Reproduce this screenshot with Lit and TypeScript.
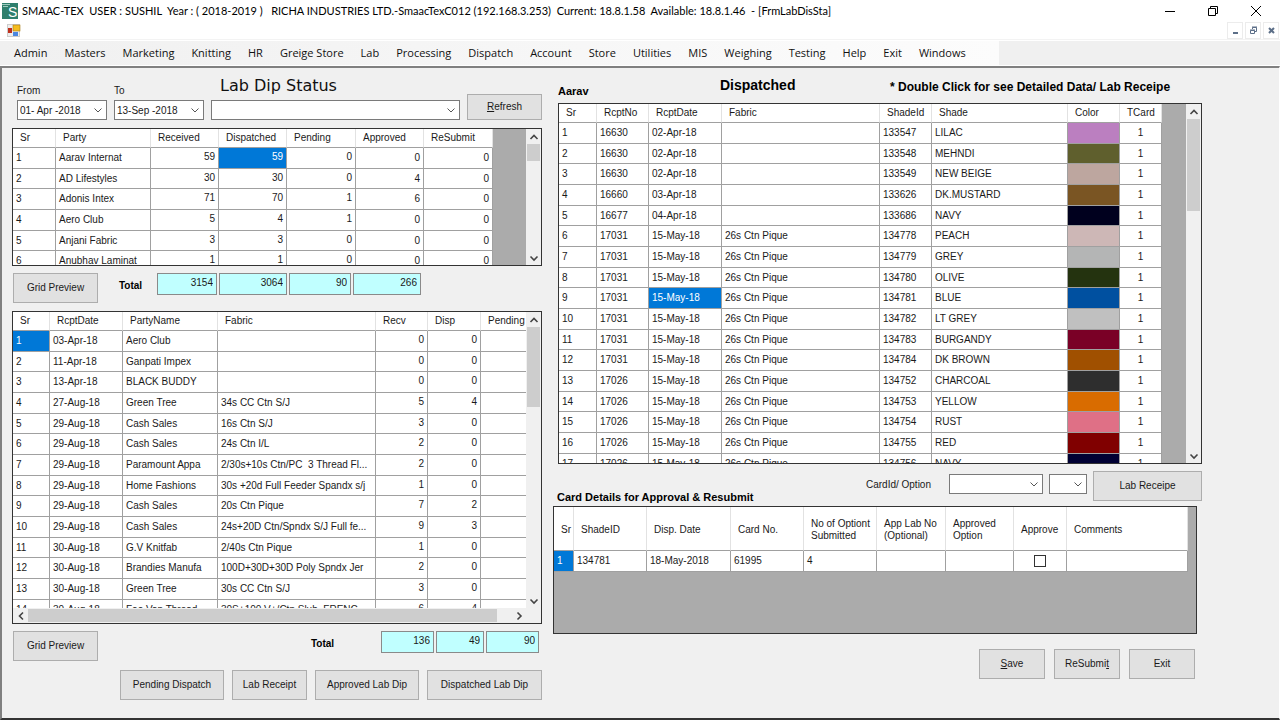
import { LitElement, html, css, nothing } from "lit";
import { customElement } from "lit/decorators.js";
import { classMap } from "lit/directives/class-map.js";

interface Column {
  label: string;
  width: number;
  kind?: "num" | "center" | "swatch" | "check";
  raised?: boolean;
}

interface GridSpec {
  name: string;
  columns: Column[];
  rows: string[][];
  selected: [number, number];
}

const statusGrid: GridSpec = {
  name: "Lab dip status by party",
  columns: [
    { label: "Sr", width: 43 },
    { label: "Party", width: 95 },
    { label: "Received", width: 68, kind: "num", raised: true },
    { label: "Dispatched", width: 68, kind: "num", raised: true },
    { label: "Pending", width: 69, kind: "num", raised: true },
    { label: "Approved", width: 68, kind: "num" },
    { label: "ReSubmit", width: 69, kind: "num" },
  ],
  rows: [
    ["1", "Aarav Internat", "59", "59", "0", "0", "0"],
    ["2", "AD Lifestyles", "30", "30", "0", "4", "0"],
    ["3", "Adonis Intex", "71", "70", "1", "6", "0"],
    ["4", "Aero Club", "5", "4", "1", "0", "0"],
    ["5", "Anjani Fabric", "3", "3", "0", "0", "0"],
    ["6", "Anubhav Laminat", "1", "1", "0", "0", "0"],
  ],
  selected: [0, 3],
};

const receiptGrid: GridSpec = {
  name: "Receipts",
  columns: [
    { label: "Sr", width: 37 },
    { label: "RcptDate", width: 73 },
    { label: "PartyName", width: 95 },
    { label: "Fabric", width: 158 },
    { label: "Recv", width: 52, kind: "num", raised: true },
    { label: "Disp", width: 53, kind: "num", raised: true },
    { label: "Pending", width: 68, kind: "num", raised: true },
  ],
  rows: [
    ["1", "03-Apr-18", "Aero Club", "", "0", "0", ""],
    ["2", "11-Apr-18", "Ganpati Impex", "", "0", "0", ""],
    ["3", "13-Apr-18", "BLACK BUDDY", "", "0", "0", ""],
    ["4", "27-Aug-18", "Green Tree", "34s CC Ctn S/J", "5", "4", ""],
    ["5", "29-Aug-18", "Cash Sales", "16s Ctn S/J", "3", "0", ""],
    ["6", "29-Aug-18", "Cash Sales", "24s Ctn I/L", "2", "0", ""],
    ["7", "29-Aug-18", "Paramount Appa", "2/30s+10s Ctn/PC  3 Thread Fl...", "2", "0", ""],
    ["8", "29-Aug-18", "Home Fashions", "30s +20d Full Feeder Spandx s/j", "1", "0", ""],
    ["9", "29-Aug-18", "Cash Sales", "20s Ctn Pique", "7", "2", ""],
    ["10", "29-Aug-18", "Cash Sales", "24s+20D Ctn/Spndx S/J Full fe...", "9", "3", ""],
    ["11", "30-Aug-18", "G.V Knitfab", "2/40s Ctn Pique", "1", "0", ""],
    ["12", "30-Aug-18", "Brandies Manufa", "100D+30D+30D Poly Spndx Jer", "2", "0", ""],
    ["13", "30-Aug-18", "Green Tree", "30s CC Ctn S/J", "3", "0", ""],
    ["14", "30-Aug-18", "Foo Van Thread", "30S+100 V+/Ctn Slub  FRENC", "6", "4", ""],
  ],
  selected: [0, 0],
};

const pique = "26s Ctn Pique";
const dispatchedGrid: GridSpec = {
  name: "Dispatched shades",
  columns: [
    { label: "Sr", width: 38 },
    { label: "RcptNo", width: 52 },
    { label: "RcptDate", width: 73 },
    { label: "Fabric", width: 158 },
    { label: "ShadeId", width: 52 },
    { label: "Shade", width: 136 },
    { label: "Color", width: 52, kind: "swatch" },
    { label: "TCard", width: 42, kind: "center" },
  ],
  rows: [
    ["1", "16630", "02-Apr-18", "", "133547", "LILAC", "#bb7fc0", "1"],
    ["2", "16630", "02-Apr-18", "", "133548", "MEHNDI", "#5f5f2d", "1"],
    ["3", "16630", "02-Apr-18", "", "133549", "NEW BEIGE", "#bda69f", "1"],
    ["4", "16660", "03-Apr-18", "", "133626", "DK.MUSTARD", "#7a5523", "1"],
    ["5", "16677", "04-Apr-18", "", "133686", "NAVY", "#00001e", "1"],
    ["6", "17031", "15-May-18", pique, "134778", "PEACH", "#cdb7b6", "1"],
    ["7", "17031", "15-May-18", pique, "134779", "GREY", "#b4b5b5", "1"],
    ["8", "17031", "15-May-18", pique, "134780", "OLIVE", "#24330f", "1"],
    ["9", "17031", "15-May-18", pique, "134781", "BLUE", "#0050a0", "1"],
    ["10", "17031", "15-May-18", pique, "134782", "LT GREY", "#c0c0c0", "1"],
    ["11", "17031", "15-May-18", pique, "134783", "BURGANDY", "#7a0026", "1"],
    ["12", "17031", "15-May-18", pique, "134784", "DK BROWN", "#a05000", "1"],
    ["13", "17026", "15-May-18", pique, "134752", "CHARCOAL", "#2e2e2e", "1"],
    ["14", "17026", "15-May-18", pique, "134753", "YELLOW", "#d96c00", "1"],
    ["15", "17026", "15-May-18", pique, "134754", "RUST", "#df7086", "1"],
    ["16", "17026", "15-May-18", pique, "134755", "RED", "#800000", "1"],
    ["17", "17026", "15-May-18", pique, "134756", "NAVY", "#000033", "1"],
  ],
  selected: [8, 2],
};

const cardGrid: GridSpec = {
  name: "Card details",
  columns: [
    { label: "Sr", width: 20 },
    { label: "ShadeID", width: 73 },
    { label: "Disp. Date", width: 84 },
    { label: "Card No.", width: 73 },
    { label: "No of Optiont Submitted", width: 73 },
    { label: "App Lab No (Optional)", width: 69 },
    { label: "Approved Option", width: 68 },
    { label: "Approve", width: 53, kind: "check" },
    { label: "Comments", width: 121 },
  ],
  rows: [["1", "134781", "18-May-2018", "61995", "4", "", "", "", ""]],
  selected: [0, 0],
};

const menus = [
  "Admin", "Masters", "Marketing", "Knitting", "HR", "Greige Store", "Lab", "Processing", "Dispatch",
  "Account", "Store", "Utilities", "MIS", "Weighing", "Testing", "Help", "Exit", "Windows",
];

const arrow = (d: string) => html`<svg class="arrow" viewBox="0 0 10 10" aria-hidden="true">
  <path d=${d} fill="none" stroke="currentColor"></path>
</svg>`;
const up = "M1.5 7 5 3.5 8.5 7";
const down = "M1.5 3.5 5 7 8.5 3.5";
const left = "M7 1.5 3.5 5 7 8.5";
const right = "M3.5 1.5 7 5 3.5 8.5";

@customElement("app-root")
export class AppRoot extends LitElement {
  static styles = css`
    :host {
      display: flex;
      flex-direction: column;
      box-sizing: border-box;
      height: 100vh;
      min-height: 720px;
      background: #fff;
      color: #1a1a1a;
      font: 10px/12px "Liberation Sans", Arial, sans-serif;
    }
    *, *::before, *::after { box-sizing: border-box; }
    button, input, select { font: inherit; color: inherit; margin: 0; border-radius: 0; }
    h1, h2, p { margin: 0; }

    .titlebar {
      display: flex;
      align-items: center;
      height: 22px;
      padding: 0 3px 0 2px;
      gap: 4px;
      font: 11px/16px Lato, sans-serif;
      color: #000;
    }
    .titlebar h1 { flex: 1; font: inherit; white-space: pre; }
    .logo { width: 16px; height: 16px; }
    .sys { display: flex; }
    .sys button { width: 43px; height: 20px; padding: 0; border: 0; background: none; display: grid; place-items: center; }
    .sys svg { width: 12px; height: 12px; }

    .mdibar { display: flex; justify-content: space-between; align-items: center; height: 18px; padding: 0 1px 0 7px; border-bottom: 1px solid #f3f3f3; }
    .mdibar > svg { width: 14px; height: 13px; }
    .mdi { display: flex; gap: 2px; }
    .mdi button { width: 16px; height: 17px; padding: 0; border: 1px solid #ececec; background: #fff; display: grid; place-items: center; }
    .mdi svg { width: 9px; height: 9px; }

    .menubar { display: flex; height: 24px; margin-top: 1px; background: #f0f0f0; }
    .menubar ul {
      display: flex;
      gap: 17px;
      margin: 0;
      padding: 0 33px 0 14px;
      list-style: none;
      background: linear-gradient(90deg, #f0f0f0, #fcfcfc);
    }
    .menubar button { height: 24px; padding: 0; border: 0; background: none; font: 11px/24px "Open Sans", sans-serif; color: #111; white-space: nowrap; }

    .workspace {
      flex: 1;
      min-height: 0;
      display: grid;
      grid-template-columns: minmax(0, 530fr) minmax(0, 649fr);
      column-gap: 11px;
      margin-top: 1px;
      padding: 8px 77px 18px 10px;
      border: solid #808080;
      border-width: 2px 0 2px 2px;
      border-bottom-color: #333;
      border-right: 1px solid #fff;
      background: #f0f0f0;
    }
    .panel { display: flex; flex-direction: column; min-height: 0; }

    .push {
      height: 30px;
      padding: 0;
      border: 1px solid #adadad;
      background: #e1e1e1;
      text-align: center;
    }
    .w66 { width: 66px; } .w75 { width: 75px; } .w85 { width: 85px; }
    .w104 { width: 104px; } .w109 { width: 109px; } .w115 { width: 115px; }
    .short { height: 26px; }

    .box { display: flex; position: relative; height: 20px; border: 1px solid #7a7a7a; background: #fff; color: #555; }
    .box input, .box select { width: 100%; min-width: 0; height: 100%; padding: 0 2px; border: 0; background: none; appearance: none; color: #1a1a1a; outline: 0; }
    .box svg { position: absolute; right: 3px; top: 4px; pointer-events: none; }
    .arrow { width: 10px; height: 10px; display: block; }

    .filters { display: flex; align-items: flex-end; height: 44px; padding-left: 5px; gap: 7px; }
    .field { display: flex; flex-direction: column; gap: 3px; width: 90px; }
    .field.party { flex: 1; gap: 5px; }
    .caption { padding-left: 9px; font: 16px/18px "DejaVu Sans", Verdana, sans-serif; color: #111; }

    .grid { display: flex; border: 1px solid #333; background: #ababab; overflow: hidden; }
    .grid .side { display: flex; flex-direction: column; flex: 1; min-width: 0; }
    .view { flex: 1; min-height: 0; overflow: hidden; }
    .status { height: 138px; margin-top: 8px; flex: none; }
    .receipts { flex: 1; min-height: 120px; margin-top: 8px; }
    .receipts > .bar { padding-bottom: 15px; }
    .dispatched { height: 361px; flex: none; margin: 6px 0 0 5px; }
    .cards { height: 128px; flex: none; margin: 3px 5px 0 0; }

    table { border-collapse: separate; border-spacing: 0; table-layout: fixed; width: 0; background: #fff; }
    th { height: 19px; padding: 0 0 0 7px; border-right: 1px solid #e2e2e2; border-bottom: 1px solid #a0a0a0; font-weight: 400; text-align: left; white-space: nowrap; }
    td { height: 21px; padding: 0 3px; border-right: 1px solid #a0a0a0; border-bottom: 1px solid #a0a0a0; white-space: pre; overflow: hidden; }
    tr:nth-child(3n + 2) td { height: 20px; }
    td.num { text-align: right; }
    td.raised { padding-top: 3px; vertical-align: top; }
    td.center, td.check { text-align: center; }
    td.selected { background: #0078d7; color: #fff; }
    .cards th { height: 44px; padding-top: 2px; white-space: normal; }
    .tick { appearance: none; display: block; width: 12px; height: 12px; margin: 0 auto; border: 1px solid #333; background: #fff; }

    .bar { display: flex; background: #f0f0f0; color: #444; }
    .bar.v { flex-direction: column; width: 15px; }
    .bar.h { height: 15px; }
    .bar button { flex: none; width: 15px; height: 15px; padding: 0; border: 0; background: none; display: grid; place-items: center; }
    .bar .arrow path { stroke-width: 1.6; }
    .track { flex: 1; }
    .v .track { display: flex; flex-direction: column; }
    .thumb { background: #cdcdcd; }
    .v .thumb { width: 13px; margin: 0 auto; }
    .h .thumb { height: 13px; margin-top: 1px; }

    .totals { display: flex; align-items: flex-start; padding: 7px 0 0 1px; }
    .totals b { line-height: 26px; width: 38px; color: #000; }
    .totals .first { margin-left: 21px; }
    .totals .second { margin-left: 213px; width: 70px; }
    .sum { height: 22px; padding: 0 3px 3px; border: 1px solid #8a8a8a; background: #c0ffff; text-align: right; outline: 0; margin-right: 2px; }
    .sum.s60 { width: 60px; } .sum.s68 { width: 68px; } .sum.s62 { width: 62px; } .sum.s48 { width: 48px; } .sum.s53 { width: 53px; }

    .actions { display: flex; justify-content: flex-end; gap: 8px; padding-top: 9px; }

    .heading { display: grid; grid-template-columns: 162px 170px auto; align-items: center; height: 21px; padding-left: 5px; color: #000; }
    .strong { font-weight: 700; font-size: 11px; line-height: 12px; color: #000; }
    .heading .who { align-self: end; }
    .heading .note { font-size: 12px; white-space: nowrap; }
    .heading h2 { font-size: 14px; line-height: 18px; align-self: start; }
    .option { display: flex; align-items: flex-start; padding-top: 7px; }
    .option .strong { flex: 1; align-self: flex-end; padding: 3px 0 0 4px; }
    .option label { padding: 8px 18px 0 0; }
    .option .box { margin: 3px 6px 0 0; }
    .option .push { margin-bottom: 2px; }
    .w94 { width: 94px; } .w37 { width: 38px; }
    .final { gap: 9px; padding: 15px 7px 0 0; }
  `;

  private scrollbar(start: number, size: number, horizontal = false) {
    const thumb = horizontal
      ? `margin-left:${start}%;width:${size}%`
      : `margin-top:${start}%;height:${size}%`;
    return html`<div class=${classMap({ bar: true, h: horizontal, v: !horizontal })}>
      <button aria-label="Scroll back">${arrow(horizontal ? left : up)}</button>
      <div class="track"><div class="thumb" style=${thumb}></div></div>
      <button aria-label="Scroll forward">${arrow(horizontal ? right : down)}</button>
    </div>`;
  }

  private table(spec: GridSpec) {
    const total = spec.columns.reduce((sum, c) => sum + c.width, 0);
    return html`<table aria-label=${spec.name} style=${`width:${total}px`}>
      <colgroup>${spec.columns.map((c) => html`<col style=${`width:${c.width}px`} />`)}</colgroup>
      <thead><tr>${spec.columns.map((c) => html`<th scope="col">${c.label}</th>`)}</tr></thead>
      <tbody>${spec.rows.map((row, r) => html`<tr>${row.map((value, i) => this.cell(spec, value, r, i))}</tr>`)}</tbody>
    </table>`;
  }

  private cell(spec: GridSpec, value: string, r: number, i: number) {
    const column = spec.columns[i];
    if (column.kind === "swatch") return html`<td style=${`background:${value}`}></td>`;
    if (column.kind === "check")
      return html`<td class="check"><input class="tick" type="checkbox" aria-label=${column.label} /></td>`;
    const names = {
      num: column.kind === "num",
      center: column.kind === "center",
      raised: !!column.raised,
      selected: spec.selected[0] === r && spec.selected[1] === i,
    };
    return html`<td class=${classMap(names)}>${value || nothing}</td>`;
  }

  private sum(label: string, value: string, size: string) {
    return html`<input class="sum ${size}" readonly aria-label=${label} .value=${value} />`;
  }

  render() {
    return html`
      <header class="titlebar">
        <svg class="logo" viewBox="0 0 16 16" aria-hidden="true">
          <rect width="16" height="16" fill="#2f7f6d"></rect>
          <path d="M0 1.5h8M1 3.5h5" stroke="#9fc9bd"></path>
          <text x="6" y="14" font-family="Liberation Sans" font-size="14" fill="#fff">S</text>
        </svg>
        <h1>SMAAC-TEX  USER : SUSHIL  Year : ( 2018-2019 )   RICHA INDUSTRIES LTD.-SmaacTexC012 (192.168.3.253)  Current: 18.8.1.58  Available: 18.8.1.46  - [FrmLabDisSta]</h1>
        <div class="sys">
          <button aria-label="Minimize"><svg viewBox="0 0 12 12"><path d="M1 6.5h10" stroke="#000"></path></svg></button>
          <button aria-label="Restore"><svg viewBox="0 0 12 12" fill="none" stroke="#000"><path d="M1.5 3.5h7v7h-7zM3.5 3.5v-2h7v7h-2"></path></svg></button>
          <button aria-label="Close"><svg viewBox="0 0 12 12"><path d="M1 1l10 10M11 1L1 11" stroke="#000"></path></svg></button>
        </div>
      </header>
      <div class="mdibar">
        <svg viewBox="0 0 14 13" aria-hidden="true">
          <rect x=".5" y=".5" width="12" height="12" fill="#eee" stroke="#ccc"></rect>
          <rect x="1" y="4" width="4" height="5" fill="#c0301c"></rect>
          <rect x="6" y="1" width="7" height="6" fill="#f5bd1f" stroke="#a97c1a" stroke-width=".6"></rect>
          <rect x="6" y="8" width="5" height="4" fill="#4a86e0"></rect>
        </svg>
        <div class="mdi">
          <button aria-label="Minimize form"><svg viewBox="0 0 9 9"><path d="M2 7h5" stroke="#5c6f88" stroke-width="2"></path></svg></button>
          <button aria-label="Restore form"><svg viewBox="0 0 9 9" fill="none" stroke="#5c6f88"><path d="M1.5 4.5h4v3h-4zM1 4h5M3.5 3V1.5h4v4H6M3 1h5"></path></svg></button>
          <button aria-label="Close form"><svg viewBox="0 0 9 9"><path d="M2 2l5 5M7 2L2 7" stroke="#5c6f88" stroke-width="2"></path></svg></button>
        </div>
      </div>
      <nav class="menubar"><ul>${menus.map((m) => html`<li><button>${m}</button></li>`)}</ul></nav>

      <main class="workspace">
        <section class="panel">
          <div class="filters">
            <div class="field"><label for="from">From</label><div class="box"><input id="from" .value=${"01- Apr -2018"} />${arrow(down)}</div></div>
            <div class="field"><label for="to">To</label><div class="box"><input id="to" .value=${"13-Sep -2018"} />${arrow(down)}</div></div>
            <div class="field party"><label class="caption" for="party">Lab Dip Status</label><div class="box"><select id="party"><option></option></select>${arrow(down)}</div></div>
            <button class="push w75 short"><u>R</u>efresh</button>
          </div>
          <div class="grid status"><div class="view">${this.table(statusGrid)}</div>${this.scrollbar(0, 16)}</div>
          <div class="totals">
            <button class="push w85">Grid Preview</button>
            <b class="first">Total</b>
            ${this.sum("Total received", "3154", "s60")}${this.sum("Total dispatched", "3064", "s68")}
            ${this.sum("Total pending", "90", "s62")}${this.sum("Total approved", "266", "s68")}
          </div>
          <div class="grid receipts">
            <div class="side"><div class="view">${this.table(receiptGrid)}</div>${this.scrollbar(0, 97, true)}</div>
            ${this.scrollbar(0, 30)}
          </div>
          <div class="totals">
            <button class="push w85">Grid Preview</button>
            <b class="second">Total</b>
            ${this.sum("Receipts received", "136", "s53")}${this.sum("Receipts dispatched", "49", "s48")}${this.sum("Receipts pending", "90", "s53")}
          </div>
          <div class="actions">
            <button class="push w104">Pending Dispatch</button>
            <button class="push w75">Lab Receipt</button>
            <button class="push w104">Approved Lab Dip</button>
            <button class="push w115">Dispatched Lab Dip</button>
          </div>
        </section>

        <section class="panel">
          <div class="heading">
            <p class="strong who">Aarav</p>
            <h2>Dispatched</h2>
            <p class="strong note">* Double Click for see Detailed Data/ Lab Receipe</p>
          </div>
          <div class="grid dispatched"><div class="view">${this.table(dispatchedGrid)}</div>${this.scrollbar(0, 28)}</div>
          <div class="option">
            <p class="strong">Card Details for Approval &amp; Resubmit</p>
            <label for="card">CardId/ Option</label>
            <div class="box w94"><select id="card"><option></option></select>${arrow(down)}</div>
            <div class="box w37"><select aria-label="Option"><option></option></select>${arrow(down)}</div>
            <button class="push w109">Lab Receipe</button>
          </div>
          <div class="grid cards"><div class="view">${this.table(cardGrid)}</div></div>
          <div class="actions final">
            <button class="push w66"><u>S</u>ave</button>
            <button class="push w66">ReSubmi<u>t</u></button>
            <button class="push w66">Exit</button>
          </div>
        </section>
      </main>
    `;
  }
}
